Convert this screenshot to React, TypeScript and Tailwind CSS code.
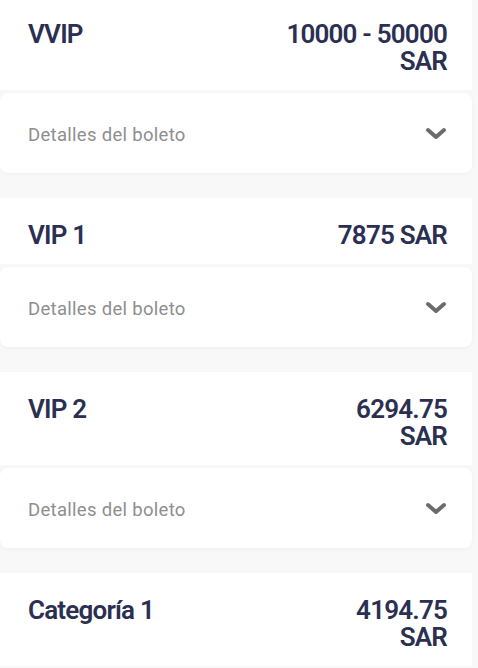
import React from "react";

type Ticket = { name: string; price: string[] };

const tickets: Ticket[] = [
  { name: "VVIP", price: ["10000 - 50000", "SAR"] },
  { name: "VIP 1", price: ["7875 SAR"] },
  { name: "VIP 2", price: ["6294.75", "SAR"] },
  { name: "Categoría 1", price: ["4194.75", "SAR"] },
];

function Chevron() {
  return (
    <svg width="22" height="13" viewBox="0 0 22 13" fill="none">
      <path
        d="M3 3 L11 10 L19 3"
        stroke="#6b6b6b"
        strokeWidth="4"
        strokeLinecap="round"
        strokeLinejoin="round"
      />
    </svg>
  );
}

export default function App() {
  return (
    <div
      className="w-[478px] h-[668px] overflow-hidden bg-[#f8f8f8] pr-[6px]"
      style={{ fontFamily: "Roboto, 'Noto Sans', sans-serif" }}
    >
      <div className="flex flex-col -mt-[3px]">
        {tickets.map((t, i) => (
          <div key={i} className="flex flex-col mb-[25px]">
            <div className="bg-white flex justify-between items-start pl-[28px] pr-[25px] pt-[24px] pb-[15px] text-[#2b2f52] font-semibold text-[26px] leading-[27px] tracking-[-0.8px]">
              <div>{t.name}</div>
              <div className="text-right">
                {t.price.map((l, j) => (
                  <div key={j}>{l}</div>
                ))}
              </div>
            </div>
            {i < 3 && (
              <div className="mt-[3px] h-[80px] bg-white rounded-[8px] shadow-[0_1px_4px_rgba(0,0,0,0.04)] flex items-center justify-between pl-[28px] pr-[25px]">
                <span className="text-[18.5px] text-[#8e8e8e] tracking-[0.3px] pt-[6px]">
                  Detalles del boleto
                </span>
                <Chevron />
              </div>
            )}
          </div>
        ))}
      </div>
    </div>
  );
}
